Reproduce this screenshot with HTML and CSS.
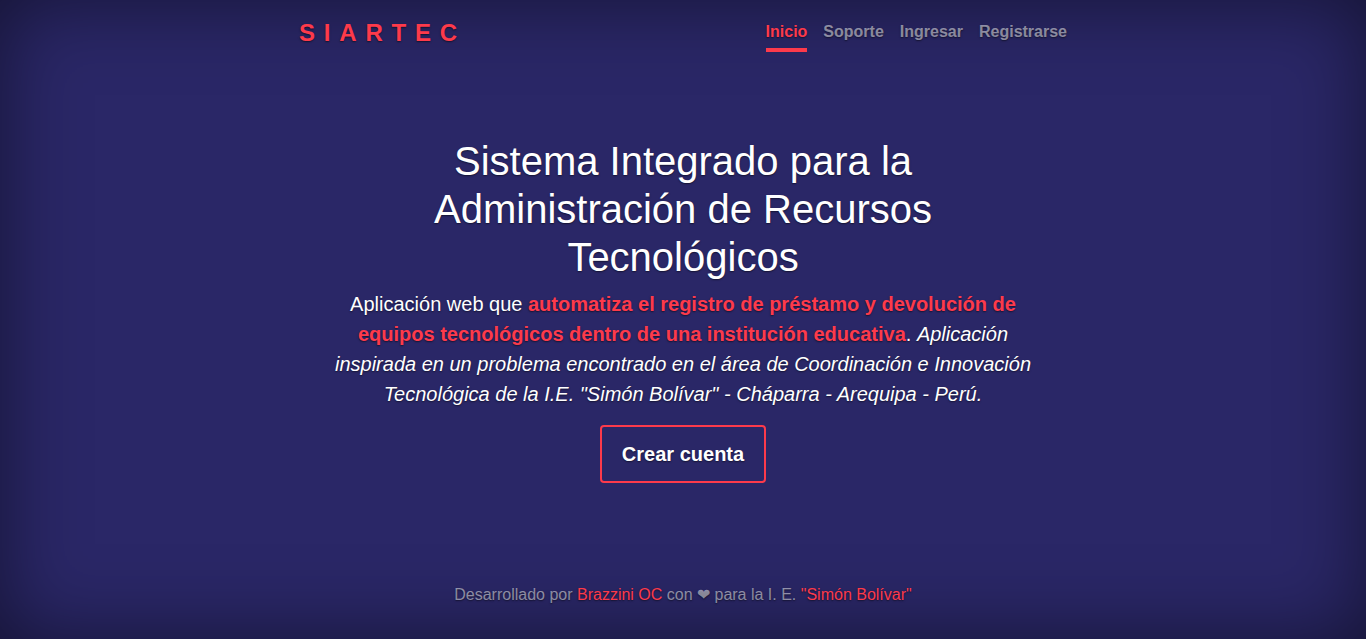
FILE: index.html
```html
<!DOCTYPE html>
<html lang="es">
<head>
<meta charset="utf-8">
<title>SIARTEC</title>
<link rel="stylesheet" href="styles.css">
</head>
<body>
<div class="cover">
  <header class="masthead">
    <h3 class="brand">SIARTEC</h3>
    <nav class="nav">
      <a class="nav-link active" href="#">Inicio</a>
      <a class="nav-link" href="#">Soporte</a>
      <a class="nav-link" href="#">Ingresar</a>
      <a class="nav-link" href="#">Registrarse</a>
    </nav>
  </header>
  <main class="inner">
    <h1 class="cover-heading">Sistema Integrado para la Administración de Recursos Tecnológicos</h1>
    <p class="lead">Aplicación web que <strong class="hl">automatiza el registro de préstamo y devolución de equipos tecnológicos dentro de una institución educativa</strong>. <em>Aplicación inspirada en un problema encontrado en el área de Coordinación e Innovación Tecnológica de la I.E. "Simón Bolívar" - Cháparra - Arequipa - Perú.</em></p>
    <p class="lead"><a href="#" class="btn">Crear cuenta</a></p>
  </main>
  <footer class="mastfoot">
    <p>Desarrollado por <a href="#">Brazzini OC</a> con ❤ para la I. E. <a href="#">"Simón Bolívar"</a></p>
  </footer>
</div>
</body>
</html>
```
FILE: styles.css
```css
html, body {
  height: 100%;
  margin: 0;
}
body {
  background: #2a2767;
  color: #fff;
  font-family: "Liberation Sans", Arial, sans-serif;
  font-size: 16px;
  line-height: 1.5;
  text-shadow: 0 .05rem .1rem rgba(0,0,0,.5);
  box-shadow: inset 0 0 5rem rgba(0,0,0,.5);
  display: flex;
}
.cover {
  width: 800px;
  box-sizing: border-box;
  margin: 0 auto;
  padding: 16px;
  display: flex;
  flex-direction: column;
  height: 100%;
}
.masthead {
  display: flex;
  justify-content: space-between;
  align-items: flex-start;
  margin-bottom: auto;
}
.brand {
  margin: 0;
  font-size: 24px;
  line-height: 1.4;
  font-weight: 700;
  letter-spacing: 8.8px;
  color: #fd3a4b;
}
.nav {
  display: flex;
}
.nav-link {
  padding: 4px 0;
  font-weight: 700;
  color: rgba(255,255,255,.5);
  text-decoration: none;
  border-bottom: 4px solid transparent;
  margin-left: 16px;
}
.nav-link.active {
  color: #fd3a4b;
  border-bottom-color: #fd3a4b;
}
.inner {
  width: 720px;
  margin: auto;
  text-align: center;
}
.cover-heading {
  margin: 0 0 8px;
  font-size: 40px;
  line-height: 1.2;
  font-weight: 500;
}
.lead {
  margin: 0 0 16px;
  font-size: 20px;
  line-height: 1.5;
}
.hl {
  color: #fd3a4b;
  font-weight: 700;
}
.btn {
  display: inline-block;
  padding: 12px 20px;
  border: 2px solid #fd3a4b;
  border-radius: 4px;
  color: #fff;
  font-weight: 700;
  text-decoration: none;
}
.mastfoot {
  margin-top: auto;
  text-align: center;
  color: rgba(255,255,255,.5);
}
.mastfoot p {
  margin: 0 0 16px;
}
.mastfoot a {
  color: #fd3a4b;
  text-decoration: none;
}
```
